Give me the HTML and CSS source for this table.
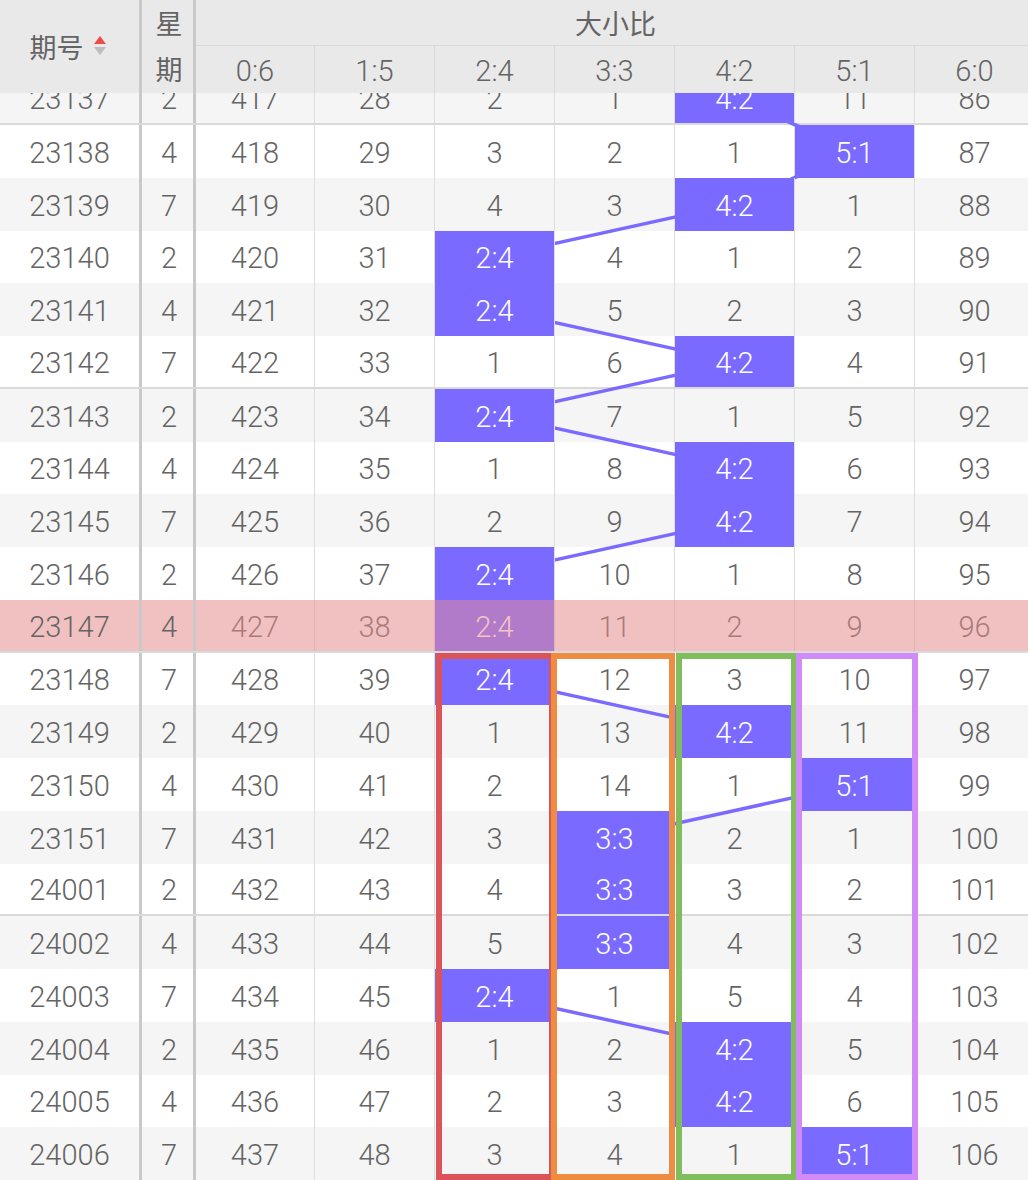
FILE: index.html
```html
<!DOCTYPE html>
<html lang="zh">
<head>
<meta charset="utf-8">
<title>大小比走势</title>
<link rel="stylesheet" href="styles.css">
</head>
<body>
<div class="table">
  <div class="head">
    <div class="h-id"><span>期号</span><span class="sort"><i class="up"></i><i class="down"></i></span></div>
    <div class="h-wk"><span>星</span><span>期</span></div>
    <div class="h-grp">
      <div class="h-title">大小比</div>
      <div class="h-cols"><span class="first">0:6</span><span>1:5</span><span>2:4</span><span>3:3</span><span>4:2</span><span>5:1</span><span>6:0</span></div>
    </div>
  </div>
  <div class="body">
    <div class="inner">
      <div class="row alt sep"><span class="c id">23137</span><span class="c wk">2</span><span class="c d first">417</span><span class="c d">28</span><span class="c d">2</span><span class="c d">1</span><span class="c d hit">4:2</span><span class="c d">11</span><span class="c d">86</span></div>
      <div class="row"><span class="c id">23138</span><span class="c wk">4</span><span class="c d first">418</span><span class="c d">29</span><span class="c d">3</span><span class="c d">2</span><span class="c d">1</span><span class="c d hit">5:1</span><span class="c d">87</span></div>
      <div class="row alt"><span class="c id">23139</span><span class="c wk">7</span><span class="c d first">419</span><span class="c d">30</span><span class="c d">4</span><span class="c d">3</span><span class="c d hit">4:2</span><span class="c d">1</span><span class="c d">88</span></div>
      <div class="row"><span class="c id">23140</span><span class="c wk">2</span><span class="c d first">420</span><span class="c d">31</span><span class="c d hit">2:4</span><span class="c d">4</span><span class="c d">1</span><span class="c d">2</span><span class="c d">89</span></div>
      <div class="row alt"><span class="c id">23141</span><span class="c wk">4</span><span class="c d first">421</span><span class="c d">32</span><span class="c d hit">2:4</span><span class="c d">5</span><span class="c d">2</span><span class="c d">3</span><span class="c d">90</span></div>
      <div class="row sep"><span class="c id">23142</span><span class="c wk">7</span><span class="c d first">422</span><span class="c d">33</span><span class="c d">1</span><span class="c d">6</span><span class="c d hit">4:2</span><span class="c d">4</span><span class="c d">91</span></div>
      <div class="row alt"><span class="c id">23143</span><span class="c wk">2</span><span class="c d first">423</span><span class="c d">34</span><span class="c d hit">2:4</span><span class="c d">7</span><span class="c d">1</span><span class="c d">5</span><span class="c d">92</span></div>
      <div class="row"><span class="c id">23144</span><span class="c wk">4</span><span class="c d first">424</span><span class="c d">35</span><span class="c d">1</span><span class="c d">8</span><span class="c d hit">4:2</span><span class="c d">6</span><span class="c d">93</span></div>
      <div class="row alt"><span class="c id">23145</span><span class="c wk">7</span><span class="c d first">425</span><span class="c d">36</span><span class="c d">2</span><span class="c d">9</span><span class="c d hit">4:2</span><span class="c d">7</span><span class="c d">94</span></div>
      <div class="row"><span class="c id">23146</span><span class="c wk">2</span><span class="c d first">426</span><span class="c d">37</span><span class="c d hit">2:4</span><span class="c d">10</span><span class="c d">1</span><span class="c d">8</span><span class="c d">95</span></div>
      <div class="row cur sep"><span class="c id">23147</span><span class="c wk">4</span><span class="c d first">427</span><span class="c d">38</span><span class="c d hit">2:4</span><span class="c d">11</span><span class="c d">2</span><span class="c d">9</span><span class="c d">96</span></div>
      <div class="row"><span class="c id">23148</span><span class="c wk">7</span><span class="c d first">428</span><span class="c d">39</span><span class="c d hit">2:4</span><span class="c d">12</span><span class="c d">3</span><span class="c d">10</span><span class="c d">97</span></div>
      <div class="row alt"><span class="c id">23149</span><span class="c wk">2</span><span class="c d first">429</span><span class="c d">40</span><span class="c d">1</span><span class="c d">13</span><span class="c d hit">4:2</span><span class="c d">11</span><span class="c d">98</span></div>
      <div class="row"><span class="c id">23150</span><span class="c wk">4</span><span class="c d first">430</span><span class="c d">41</span><span class="c d">2</span><span class="c d">14</span><span class="c d">1</span><span class="c d hit">5:1</span><span class="c d">99</span></div>
      <div class="row alt"><span class="c id">23151</span><span class="c wk">7</span><span class="c d first">431</span><span class="c d">42</span><span class="c d">3</span><span class="c d hit">3:3</span><span class="c d">2</span><span class="c d">1</span><span class="c d">100</span></div>
      <div class="row sep"><span class="c id">24001</span><span class="c wk">2</span><span class="c d first">432</span><span class="c d">43</span><span class="c d">4</span><span class="c d hit">3:3</span><span class="c d">3</span><span class="c d">2</span><span class="c d">101</span></div>
      <div class="row alt"><span class="c id">24002</span><span class="c wk">4</span><span class="c d first">433</span><span class="c d">44</span><span class="c d">5</span><span class="c d hit">3:3</span><span class="c d">4</span><span class="c d">3</span><span class="c d">102</span></div>
      <div class="row"><span class="c id">24003</span><span class="c wk">7</span><span class="c d first">434</span><span class="c d">45</span><span class="c d hit">2:4</span><span class="c d">1</span><span class="c d">5</span><span class="c d">4</span><span class="c d">103</span></div>
      <div class="row alt"><span class="c id">24004</span><span class="c wk">2</span><span class="c d first">435</span><span class="c d">46</span><span class="c d">1</span><span class="c d">2</span><span class="c d hit">4:2</span><span class="c d">5</span><span class="c d">104</span></div>
      <div class="row"><span class="c id">24005</span><span class="c wk">4</span><span class="c d first">436</span><span class="c d">47</span><span class="c d">2</span><span class="c d">3</span><span class="c d hit">4:2</span><span class="c d">6</span><span class="c d">105</span></div>
      <div class="row alt"><span class="c id">24006</span><span class="c wk">7</span><span class="c d first">437</span><span class="c d">48</span><span class="c d">3</span><span class="c d">4</span><span class="c d">1</span><span class="c d hit">5:1</span><span class="c d">106</span></div>

      <svg class="lines" width="1040" height="1108" viewBox="0 0 1040 1108">
        <g stroke="#7a6aff" stroke-width="3.5" stroke-linecap="round" fill="none">
          <line x1="735" y1="26.375" x2="855" y2="79.125"/>
          <line x1="855" y1="79.125" x2="735" y2="131.875"/>
          <line x1="735" y1="131.875" x2="495" y2="184.625"/>
          <line x1="495" y1="237.375" x2="735" y2="290.125"/>
          <line x1="735" y1="290.125" x2="495" y2="342.875"/>
          <line x1="495" y1="342.875" x2="735" y2="395.625"/>
          <line x1="735" y1="448.375" x2="495" y2="501.125"/>
          <line x1="495" y1="606.625" x2="735" y2="659.375"/>
          <line x1="735" y1="659.375" x2="855" y2="712.125"/>
          <line x1="855" y1="712.125" x2="615" y2="764.875"/>
          <line x1="615" y1="870.375" x2="495" y2="923.125"/>
          <line x1="495" y1="923.125" x2="735" y2="975.875"/>
          <line x1="735" y1="1028.625" x2="855" y2="1081.375"/>
        </g>
      </svg>

      <div class="box box-red"></div>
      <div class="box box-orange"></div>
      <div class="box box-green"></div>
      <div class="box box-violet"></div>
    </div>
  </div>
</div>
</body>
</html>
```

FILE: styles.css
```css
html, body {
  margin: 0;
  padding: 0;
  width: 1028px;
  height: 1180px;
  overflow: hidden;
  background: #ffffff;
}

body {
  font-family: Roboto, "Noto Sans CJK SC", sans-serif;
  color: #646464;
}

.table {
  width: 1035px;
}

/* ---------- header ---------- */
.head {
  display: flex;
  height: 93px;
  background: #e9e9e9;
  position: relative;
  z-index: 5;
}

.h-id {
  width: 142px;
  box-sizing: border-box;
  border-right: 3px solid #c9c9c9;
  display: flex;
  align-items: center;
  justify-content: center;
  gap: 10px;
  font-size: 27px;
  font-family: "Noto Sans CJK SC", sans-serif;
  padding-right: 4px;
}

.sort {
  display: flex;
  flex-direction: column;
  gap: 3px;
  margin-top: -2px;
}

.sort i {
  display: block;
  width: 0;
  height: 0;
  border-left: 6px solid transparent;
  border-right: 6px solid transparent;
}

.sort .up {
  border-bottom: 8px solid #ee4a4a;
}

.sort .down {
  border-top: 8px solid #bdbdbd;
}

.h-wk {
  width: 54px;
  box-sizing: border-box;
  border-right: 3px solid #c9c9c9;
  display: flex;
  flex-direction: column;
  align-items: center;
  justify-content: center;
  font-size: 27px;
  line-height: 46px;
  font-family: "Noto Sans CJK SC", sans-serif;
  padding-bottom: 2px;
  padding-left: 3px;
}

.h-grp {
  width: 839px;
  display: flex;
  flex-direction: column;
}

.h-title {
  height: 46px;
  box-sizing: border-box;
  border-bottom: 1px solid #d8d8d8;
  display: flex;
  align-items: center;
  justify-content: center;
  font-size: 27px;
  font-family: "Noto Sans CJK SC", sans-serif;
}

.h-cols {
  display: flex;
  flex: 1;
}

.h-cols span {
  width: 120px;
  box-sizing: border-box;
  border-right: 1px solid #d8d8d8;
  display: flex;
  align-items: center;
  justify-content: center;
  font-size: 29px;
  font-weight: 300;
  padding-top: 3px;
}

.h-cols span.first {
  width: 119px;
}

/* ---------- body ---------- */
.body {
  height: 1087px;
  overflow: hidden;
  position: relative;
}

.inner {
  position: relative;
  margin-top: -20.75px;
}

.row {
  display: flex;
  height: 52.75px;
  box-sizing: border-box;
  background: #ffffff;
}

.row.alt {
  background: #f5f5f5;
}

.row.sep {
  border-bottom: 2px solid #dadada;
}

.c {
  display: flex;
  align-items: center;
  justify-content: center;
  font-size: 29px;
  font-weight: 300;
  padding-top: 3px;
  box-sizing: border-box;
}

.id {
  width: 142px;
  border-right: 3px solid #c9c9c9;
}

.wk {
  width: 54px;
  border-right: 3px solid #c9c9c9;
  padding-left: 3px;
}

.d {
  width: 120px;
  border-right: 1px solid #dedede;
}

.d.first {
  width: 119px;
}

.hit {
  background: #7a6aff;
  color: #ffffff;
  position: relative;
  z-index: 2;
}

.row.cur {
  background: #f1c1c1;
}

.row.cur .d {
  color: #a97a7a;
  border-right-color: #e2b2b2;
}

.row.cur .hit {
  background: #b27bc9;
  color: #f3c4c4;
}

.lines {
  position: absolute;
  left: 0;
  top: 0;
  z-index: 1;
  pointer-events: none;
}

/* ---------- highlight boxes ---------- */
.box {
  position: absolute;
  top: 580.25px;
  height: 527.5px;
  box-sizing: border-box;
  border: 6px solid;
  z-index: 3;
  pointer-events: none;
}

.box-red {
  left: 436px;
  width: 119px;
  border-color: #da5459;
}

.box-orange {
  left: 551px;
  width: 124px;
  border-color: #ee8d42;
}

.box-green {
  left: 676px;
  width: 121px;
  border-color: #80bd5c;
}

.box-violet {
  left: 796px;
  width: 122px;
  border-color: #d18bf6;
}
```
